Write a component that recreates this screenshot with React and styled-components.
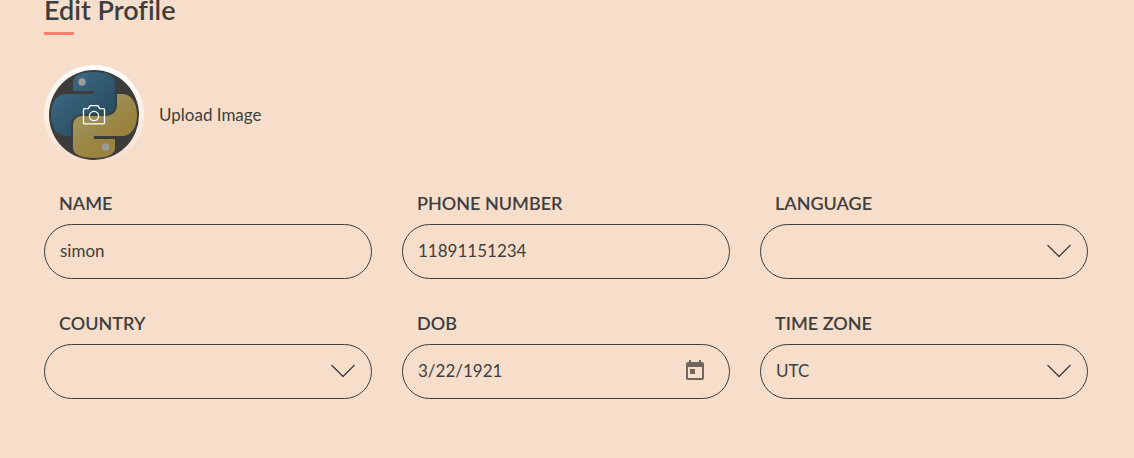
import React, { useState } from "react";
import styled, { createGlobalStyle } from "styled-components";
import { MdToday } from "react-icons/md";

const ink = "#3e3e3e";
const paper = "#f6decb";

const GlobalStyle = createGlobalStyle`
  *, *::before, *::after { box-sizing: border-box; }
  body {
    margin: 0;
    background: ${paper};
    color: ${ink};
    font-family: Lato, "Liberation Sans", sans-serif;
    font-variant-ligatures: none;
  }
`;

const Page = styled.main`
  padding: 0 46px 59px 44px;
`;

const Title = styled.h1`
  margin: 0 0 30px;
  font-size: 27px;
  font-weight: 600;
  line-height: 20px;

  &::after {
    content: "";
    display: block;
    width: 30px;
    height: 3px;
    margin-top: 12px;
    background: #ff7f70;
  }
`;

const Upload = styled.label`
  display: inline-flex;
  align-items: center;
  gap: 15px;
  margin-bottom: 26px;
  font-size: 17px;
  line-height: 20px;
  cursor: pointer;
`;

const FileInput = styled.input`
  position: absolute;
  width: 1px;
  height: 1px;
  opacity: 0;
`;

const AvatarRing = styled.span`
  display: block;
  padding: 5px;
  border-radius: 50%;
  background: linear-gradient(#ffffff, ${paper});

  svg { display: block; }
`;

const Fields = styled.form`
  display: grid;
  grid-template-columns: repeat(3, minmax(0, 1fr));
  gap: 32px 30px;
`;

const Field = styled.div`
  display: flex;
  flex-direction: column;
  gap: 9px;
`;

const FieldLabel = styled.label`
  padding-left: 15px;
  font-size: 18px;
  font-weight: 600;
  line-height: 24px;
  text-transform: uppercase;
`;

const Control = styled.div`
  display: grid;
  grid-template-columns: minmax(0, 1fr) auto;
  align-items: center;
  height: 55px;
  padding-bottom: 2px;
  border: 1px solid ${ink};
  border-radius: 28px;

  &:focus-within { box-shadow: 0 0 0 1px ${ink}; }
`;

const TextInput = styled.input`
  grid-column: 1;
  grid-row: 1;
  width: 100%;
  height: 51px;
  padding: 0 15px;
  border: 0;
  outline: 0;
  background: transparent;
  color: ${ink};
  font: 400 17px/24px Lato, "Liberation Sans", sans-serif;
`;

const Select = styled(TextInput).attrs({ as: "select" })`
  grid-column: 1 / -1;
  appearance: none;
`;

const Chevron = styled.svg`
  grid-column: 2;
  grid-row: 1;
  margin-right: 16px;
  pointer-events: none;
`;

const IconButton = styled.button`
  display: flex;
  margin-right: 22px;
  padding: 0;
  border: 0;
  background: transparent;
  color: #6f665e;
  cursor: pointer;
`;

const petal =
  "M45 2C31 2 24 6 24 12V21H45V24H17C8 24 2 32 2 45C2 58 8 66 17 66H22V55C22 48 27 44 34 44H57C62 44 66 40 66 35V12C66 6 59 2 45 2Z";

function Avatar() {
  return (
    <AvatarRing>
      <svg width="90" height="90" viewBox="0 0 90 90" aria-hidden="true">
        <defs>
          <linearGradient id="blue" x1="0" y1="0.1" x2="0.8" y2="0.9">
            <stop offset="0.1" stopColor="#3e6b87" />
            <stop offset="0.8" stopColor="#2a5064" />
          </linearGradient>
          <linearGradient id="yellow" x1="0.9" y1="0.9" x2="0.2" y2="0.1">
            <stop offset="0.1" stopColor="#9e9562" />
            <stop offset="0.7" stopColor="#9a833e" />
          </linearGradient>
        </defs>
        <circle cx="45" cy="45" r="45" fill="#3c3c3c" />
        <path d={petal} fill="url(#blue)" />
        <path d={petal} fill="url(#yellow)" transform="rotate(180 45 45)" />
        <circle cx="33" cy="12" r="3.7" fill="#9b9b9b" />
        <circle cx="56.5" cy="77" r="3.7" fill="#9b9b9b" />
        <g fill="none" stroke="#fff" strokeWidth="1.3" strokeLinejoin="round">
          <path d="M35.6 38.6H39.2L41.2 35.7H48.8L50.8 38.6H54.4Q55.5 38.6 55.5 39.7V52.8Q55.5 53.9 54.4 53.9H35.6Q34.5 53.9 34.5 52.8V39.7Q34.5 38.6 35.6 38.6Z" />
          <circle cx="45" cy="46" r="4.6" />
        </g>
      </svg>
    </AvatarRing>
  );
}

function TextField({ id, label, initial, type = "text", children }) {
  const [value, setValue] = useState(initial);
  return (
    <Field>
      <FieldLabel htmlFor={id}>{label}</FieldLabel>
      <Control>
        <TextInput
          id={id}
          type={type}
          value={value}
          onChange={(e) => setValue(e.target.value)}
        />
        {children}
      </Control>
    </Field>
  );
}

function SelectField({ id, label, options }) {
  return (
    <Field>
      <FieldLabel htmlFor={id}>{label}</FieldLabel>
      <Control>
        <Select id={id} defaultValue={options[0]}>
          {options.map((option) => (
            <option key={option}>{option}</option>
          ))}
        </Select>
        <Chevron width="24" height="14" viewBox="0 0 24 14" aria-hidden="true">
          <path d="M.5 1L12 12.5L23.5 1" fill="none" stroke={ink} strokeWidth="1.3" />
        </Chevron>
      </Control>
    </Field>
  );
}

export default function App() {
  return (
    <>
      <GlobalStyle />
      <Page>
        <Title>Edit Profile</Title>
        <Upload>
          <FileInput type="file" accept="image/*" />
          <Avatar />
          Upload Image
        </Upload>
        <Fields>
          <TextField id="name" label="Name" initial="simon" />
          <TextField id="phone" label="Phone Number" type="tel" initial="11891151234" />
          <SelectField id="language" label="Language" options={[""]} />
          <SelectField id="country" label="Country" options={[""]} />
          <TextField id="dob" label="DOB" initial="3/22/1921">
            <IconButton type="button" aria-label="Open calendar">
              <MdToday size={24} />
            </IconButton>
          </TextField>
          <SelectField id="timezone" label="Time Zone" options={["UTC"]} />
        </Fields>
      </Page>
    </>
  );
}
